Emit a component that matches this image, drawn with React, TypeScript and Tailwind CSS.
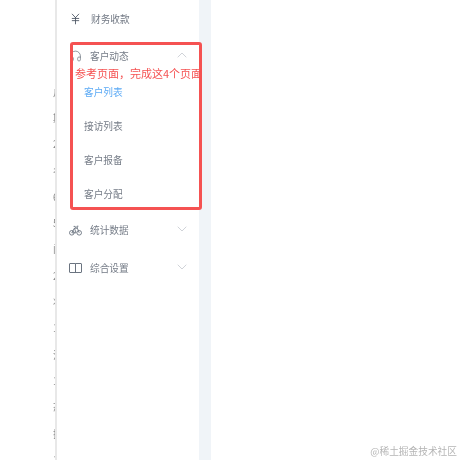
import { ChevronDown, ChevronUp, Headphones, JapaneseYen } from "lucide-react";
import type { ReactNode } from "react";

// cut-off table text peeking out from behind the sidebar
const clipped = ["户", "期", "2", "名", "6", "5", "门", "2", "状", "1", "注", "1", "态", "操", "1", "名"];

const BikeIcon = () => (
  <svg width="13" height="11" viewBox="0 0 13 11" fill="none" stroke="#6b7480" strokeWidth="0.9">
    <circle cx="2.8" cy="7.8" r="2.3" />
    <circle cx="10.2" cy="7.8" r="2.3" />
    <path d="M2.8 7.8 5.4 3.2h3l1.8 4.6M5.4 3.2l1.7 4.6h-4.3M4.6 1.4h1.6l.9 1.8M8.4 3.2l-.5-2h1.5" />
  </svg>
);

const BookIcon = () => (
  <svg width="13" height="12" viewBox="0 0 13 12" fill="none" stroke="#6b7480" strokeWidth="1">
    <path d="M6.5 1.5H1a.5.5 0 0 0-.5.5v8a.5.5 0 0 0 .5.5h11a.5.5 0 0 0 .5-.5V2a.5.5 0 0 0-.5-.5H6.5Zm0 0v9" />
  </svg>
);

const MenuRow = ({
  icon,
  label,
  open,
  first,
}: {
  icon: ReactNode;
  label: string;
  open?: boolean;
  first?: boolean;
}) => (
  <div className={`flex items-center pl-[12px] pr-[9px] ${first ? "h-[36px] gap-[9px]" : "h-[38px] gap-[8px]"}`}>
    <span className="flex w-[13px] justify-center">{icon}</span>
    <span className="flex-1 text-[9.7px] text-[#747b86]">{label}</span>
    {open === undefined ? null : open ? (
      <ChevronUp className="-mt-[3px]" size={16} color="#b8bdc4" strokeWidth={1} />
    ) : (
      <ChevronDown className="-mt-[3px]" size={16} color="#b8bdc4" strokeWidth={1} />
    )}
  </div>
);

const SubRow = ({ label, active }: { label: string; active?: boolean }) => (
  <div className={`flex h-[34px] items-center pl-[27px] text-[9.7px] ${active ? "text-[#5aa9f5]" : "text-[#747b86]"}`}>
    {label}
  </div>
);

export default function App() {
  return (
    <div
      className="relative flex h-[460px] w-[460px] overflow-hidden bg-white blur-[0.3px]"
      style={{ fontFamily: '"Noto Sans CJK SC", "Noto Sans", sans-serif' }}
    >
      <div className="w-[57px] shrink-0 overflow-hidden border-r-2 border-[#e8e8e8] pt-[78px]">
        {clipped.map((c, i) => (
          <div key={i} className="ml-[53px] flex h-[26.3px] items-center text-[10px] text-[#8a8a8a]">
            {c}
          </div>
        ))}
      </div>

      <div className="w-[142px] shrink-0 pt-[1px]">
        <MenuRow first icon={<JapaneseYen size={14} color="#4b5563" strokeWidth={1.6} />} label="财务收款" />
        <MenuRow icon={<Headphones size={14} color="#5b6470" strokeWidth={1.2} />} label="客户动态" open />
        <SubRow label="客户列表" active />
        <SubRow label="接访列表" />
        <SubRow label="客户报备" />
        <SubRow label="客户分配" />
        <MenuRow icon={<BikeIcon />} label="统计数据" open={false} />
        <MenuRow icon={<BookIcon />} label="综合设置" open={false} />
      </div>

      <div className="w-[12px] shrink-0 bg-[#f0f4f8]" />
      <div className="flex-1" />

      {/* red review annotation on top of the screenshot */}
      <div className="absolute left-[70px] top-[42px] h-[168px] w-[132px] rounded-[3px] border-[3px] border-[#f55252] pl-[2px] pt-[20px]">
        <p className="whitespace-nowrap text-[11px] leading-[16px] text-[#f55252]">参考页面，完成这4个页面</p>
      </div>

      <span className="absolute bottom-[2px] right-[3px] text-[9.7px] leading-[14px] text-[#b5b5b5]">@稀土掘金技术社区</span>
    </div>
  );
}
